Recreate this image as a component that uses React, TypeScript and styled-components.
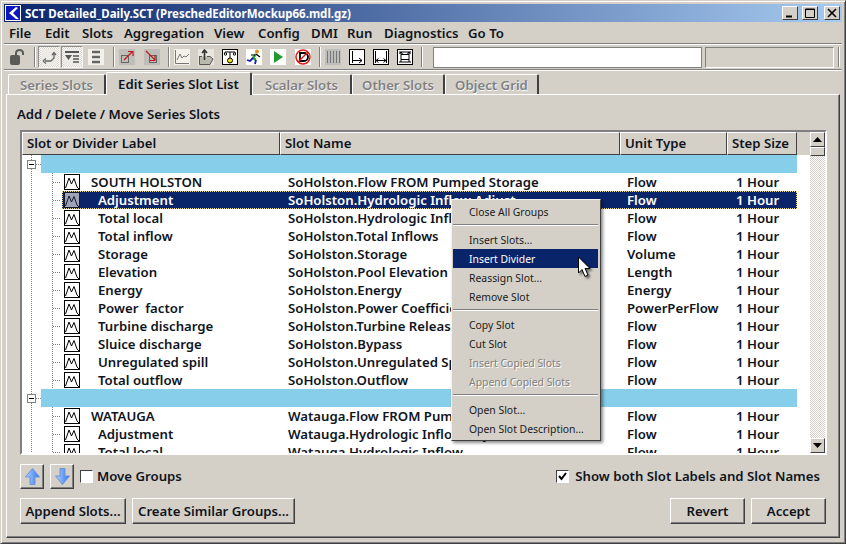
import React from 'react';
import styled, { createGlobalStyle } from 'styled-components';

const face = '#d4d0c8';
const navy = '#0a246a';
const uiFont = '"Noto Sans", "Liberation Sans", sans-serif';

const GlobalStyle = createGlobalStyle`
  html, body {
    margin: 0;
    padding: 0;
    background: ${face};
  }
  * {
    box-sizing: border-box;
  }
`;

const Window = styled.div`
  position: relative;
  width: 846px;
  height: 544px;
  overflow: hidden;
  background: ${face};
  border-style: solid;
  border-width: 1px;
  border-color: ${face} #404040 #404040 ${face};
  box-shadow: inset 1px 1px 0 #fff, inset -1px -1px 0 #808080;
  padding: 3px 3px 0 3px;
  font-family: ${uiFont};
  font-size: 13.2px;
  font-weight: 600;
  color: #10141c;
  display: flex;
  flex-direction: column;
`;

const TitleBar = styled.div`
  height: 18px;
  flex: none;
  display: flex;
  align-items: center;
  padding: 0 2px 0 1px;
  gap: 4px;
  color: #fff;
  font-size: 11.5px;
  font-weight: 700;
  background: linear-gradient(90deg, ${navy}, #a6caf0);
`;

const TitleText = styled.span`
  flex: 1;
  white-space: pre;
`;

const WinButton = styled.div<{ $gap?: number }>`
  width: 16px;
  height: 14px;
  margin-left: ${p => p.$gap ?? 0}px;
  background: ${face};
  border: 1px solid;
  border-color: #fff #404040 #404040 #fff;
  display: flex;
  align-items: center;
  justify-content: center;
`;

const MenuBar = styled.div`
  height: 21px;
  flex: none;
  display: flex;
  align-items: center;
  padding-left: 5px;
`;

const MenuItem = styled.span<{ $w: number }>`
  flex: none;
  width: ${p => p.$w}px;
`;

const Groove = styled.div`
  height: 2px;
  flex: none;
  border-top: 1px solid #808080;
  border-bottom: 1px solid #fff;
`;

const ToolBar = styled.div`
  height: 24px;
  flex: none;
  display: flex;
  align-items: center;
  padding-left: 6px;
`;

const Tool = styled.div<{ $gap?: number; $on?: boolean }>`
  flex: none;
  width: ${p => (p.$on ? 22 : 16)}px;
  height: ${p => (p.$on ? 22 : 16)}px;
  margin-left: ${p => p.$gap ?? 0}px;
  display: flex;
  align-items: center;
  justify-content: center;
  ${p => p.$on && `
    border: 1px solid;
    border-color: #909090 #f4f4f0 #f4f4f0 #909090;
    background: repeating-conic-gradient(#fff 0 25%, ${face} 0 50%) 0 0 / 2px 2px;
  `}
`;

const ToolSep = styled.div<{ $gap: number }>`
  flex: none;
  width: 2px;
  height: 20px;
  margin-left: ${p => p.$gap}px;
  border-left: 1px solid #808080;
  border-right: 1px solid #fff;
`;

const ToolInput = styled.div`
  flex: none;
  width: 269px;
  height: 21px;
  margin-left: 10px;
  background: #fff;
  border: 1px solid;
  border-color: #404040 ${face} ${face} #404040;
  outline: 1px solid;
  outline-color: #808080;
  outline-offset: -1px;
`;

const ToolField = styled.div`
  flex: none;
  width: 129px;
  height: 21px;
  margin-left: 3px;
  border: 1px solid;
  border-color: #808080 #fff #fff #808080;
`;

const TabRow = styled.div`
  height: 23px;
  flex: none;
  display: flex;
  align-items: flex-end;
  padding-left: 4px;
`;

const Tab = styled.div<{ $active?: boolean; $w: number }>`
  flex: none;
  width: ${p => p.$w}px;
  height: ${p => (p.$active ? 23 : 20)}px;
  margin-bottom: ${p => (p.$active ? -1 : 0)}px;
  position: relative;
  z-index: ${p => (p.$active ? 1 : 0)};
  display: flex;
  align-items: center;
  justify-content: center;
  background: ${face};
  border-style: solid;
  border-width: 1px 2px 0 1px;
  border-color: #fff #404040 ${face} #fff;
  border-radius: 2px 2px 0 0;
  color: ${p => (p.$active ? '#10141c' : '#808080')};
  text-shadow: ${p => (p.$active ? 'none' : '0.5px 0.5px 0 #fff')};
`;

const Panel = styled.div`
  height: 444px;
  flex: none;
  margin: 0 2px;
  border-style: solid;
  border-width: 1px;
  border-color: #fff #404040 #404040 #fff;
  box-shadow: inset -1px -1px 0 #808080;
  padding: 10px 0 0 13px;
  display: flex;
  flex-direction: column;
`;

const PanelTitle = styled.div`
  height: 18px;
  line-height: 18px;
  flex: none;
  margin-left: -3px;
  margin-bottom: 7px;
`;

const TableFrame = styled.div`
  flex: none;
  width: 807px;
  height: 325px;
  display: flex;
  border: 2px solid;
  border-color: #808080 #fff #fff #808080;
  box-shadow: inset 1px 1px 0 ${face};
`;

const TableMain = styled.div`
  width: 788px;
  display: flex;
  flex-direction: column;
`;

const HeaderRow = styled.div`
  height: 23px;
  flex: none;
  display: flex;
  background: ${face};
`;

const HeaderCell = styled.div<{ $w: number }>`
  flex: none;
  width: ${p => p.$w}px;
  display: flex;
  align-items: center;
  padding: 0 0 2px 4px;
  border: 1px solid;
  border-color: #fff #404040 #404040 #fff;
`;

const TableBody = styled.div`
  flex: 1;
  overflow: hidden;
  background: #fff;
`;

const Row = styled.div`
  height: 18px;
  display: flex;
`;

const SlotRowBox = styled.div<{ $selected?: boolean }>`
  width: 735px;
  height: 18px;
  flex: none;
  display: grid;
  grid-template-columns: 226px 339px 109px 61px;
  align-items: center;
  white-space: pre;
  ${p => p.$selected && `
    background: ${navy};
    color: #fff;
    outline: 1px dotted #e8d88a;
    outline-offset: -1px;
  `}
`;

const LabelCell = styled.div`
  display: flex;
  align-items: center;
  padding-left: 2px;
`;

const LabelText = styled.span<{ $head?: boolean }>`
  margin-left: ${p => (p.$head ? 11 : 18)}px;
`;

const DividerBand = styled.div`
  width: 756px;
  height: 18px;
  flex: none;
  background: #87ceeb;
`;

const Scroller = styled.div`
  flex: none;
  width: 15px;
  display: flex;
  flex-direction: column;
  background: repeating-conic-gradient(#fff 0 25%, ${face} 0 50%) 0 0 / 2px 2px;
`;

const ScrollButton = styled.div`
  flex: none;
  height: 15px;
  background: ${face};
  border: 1px solid;
  border-color: #fff #404040 #404040 #fff;
  display: flex;
  align-items: center;
  justify-content: center;
`;

const ScrollThumb = styled.div`
  flex: none;
  height: 9px;
  margin-bottom: auto;
  background: ${face};
  border: 1px solid;
  border-color: #fff #404040 #404040 #fff;
`;

const ControlRow = styled.div`
  flex: none;
  display: flex;
  align-items: center;
  height: 25px;
  margin-top: 9px;
`;

const ArrowButton = styled.div`
  width: 24px;
  height: 25px;
  margin-right: 6px;
  background: ${face};
  border: 1px solid;
  border-color: #fff #404040 #404040 #fff;
  box-shadow: inset -1px -1px 0 #808080;
  display: flex;
  align-items: center;
  justify-content: center;
`;

const CheckBox = styled.div`
  flex: none;
  width: 13px;
  height: 13px;
  background: #fff;
  border: 1px solid;
  border-color: #404040 #fff #fff #404040;
  display: flex;
  align-items: center;
  justify-content: center;
`;

const CheckLabel = styled.span<{ $gap: number }>`
  margin-left: ${p => p.$gap}px;
  padding-bottom: 2px;
  white-space: pre;
`;

const Spacer = styled.div`
  flex: 1;
`;

const RowEnd = styled.div`
  flex: none;
  width: 19px;
`;

const ButtonRow = styled.div`
  flex: none;
  display: flex;
  gap: 6px;
  height: 26px;
  margin-top: 9px;
  width: 806px;
`;

const PushButton = styled.div<{ $w: number }>`
  flex: none;
  width: ${p => p.$w}px;
  display: flex;
  align-items: center;
  justify-content: center;
  background: ${face};
  border: 1px solid;
  border-color: #fff #404040 #404040 #fff;
  box-shadow: inset -1px -1px 0 #808080;
`;

const Popup = styled.div`
  position: absolute;
  left: 450px;
  top: 198px;
  width: 150px;
  padding: 2px 2px 2px 1px;
  background: ${face};
  border: 1px solid;
  border-color: #f4f2ee #404040 #404040 #f4f2ee;
  box-shadow: 2px 2px 3px rgba(0, 0, 0, 0.45);
  font-size: 10.4px;
  font-weight: 400;
  color: #1a1a1a;
  z-index: 5;
`;

const PopupItem = styled.div<{ $active?: boolean; $off?: boolean }>`
  height: 19px;
  line-height: 21px;
  padding-left: 16px;
  white-space: pre;
  ${p => p.$active && `background: ${navy}; color: #fff;`}
  ${p => p.$off && 'color: #808080; text-shadow: 1px 1px 0 #fff;'}
`;

const PopupSep = styled.div`
  height: 2px;
  margin: 3px 0 4px;
  border-top: 1px solid #808080;
  border-bottom: 1px solid #fff;
`;

const PointerIcon = styled.svg`
  position: absolute;
  left: 576px;
  top: 255px;
  z-index: 6;
  filter: drop-shadow(2px 2px 1px rgba(0, 0, 0, 0.5));
`;

const Logo = () => (
  <svg width="16" height="16" viewBox="0 0 16 16">
    <rect width="16" height="16" fill="#0b18c0" />
    <rect x="0.5" y="0.5" width="15" height="15" fill="none" stroke="#fff" />
    <path d="M11 2 L4 8 L11 14 L14 14 L8 8 L13 3 Z" fill="#fff" />
  </svg>
);

const SlotIcon = ({ dim }: { dim?: boolean }) => (
  <svg width="16" height="16" viewBox="0 0 16 16" style={{ flex: 'none' }}>
    <rect x="0.5" y="0.5" width="15" height="15" fill={dim ? '#9fa3b6' : '#fff'} stroke={dim ? '#10162e' : '#000'} />
    <path d="M1.5 14 L5 4 L7.5 10 L10 4.5 L13 13 L15 15" fill="none" stroke={dim ? '#10162e' : '#000'} />
  </svg>
);

const TreeGutter = ({ group, w }: { group?: boolean; w: number }) => (
  <svg width={w} height="18" viewBox={`0 0 ${w} 18`} style={{ flex: 'none' }}>
    {group ? (
      <g>
        <path d="M9.5 0 V5 M9.5 14 V18 M14 9.5 H19" stroke="#808080" strokeDasharray="1 1" />
        <rect x="5.5" y="5.5" width="8" height="8" fill="#fff" stroke="#808080" />
        <path d="M7 9.5 H12" stroke="#000" />
      </g>
    ) : (
      <path d="M9.5 0 V18 M30.5 0 V18 M31 9.5 H39" stroke="#808080" strokeDasharray="1 1" fill="none" />
    )}
  </svg>
);

const icon = {
  lock: (
    <svg width="16" height="16" viewBox="0 0 16 16">
      <rect x="0" y="6" width="10" height="10" rx="2" fill="#5a5a56" />
      <path d="M6 7 V4 a3.5 3 0 0 1 7 0 V6" fill="none" stroke="#5a5a56" strokeWidth="2" />
    </svg>
  ),
  swap: (
    <svg width="16" height="16" viewBox="0 0 16 16">
      <rect width="16" height="16" fill="#ecebe6" />
      <path d="M13 4 V9 L10 12 H4 M2 12 L5 9.5 M2 12 L5 14.5 M11 6 L13 3.5 L15 6" fill="none" stroke="#666" strokeWidth="1.3" />
    </svg>
  ),
  sort: (
    <svg width="16" height="16" viewBox="0 0 16 16">
      <rect width="16" height="16" fill="#ecebe6" />
      <path d="M1 3 H15" stroke="#555" strokeWidth="2" />
      <path d="M1 6 H8 L4.5 11 Z" fill="#555" />
      <path d="M9 7 H15 M9 10 H15 M9 13 H15" stroke="#555" strokeWidth="1.6" />
    </svg>
  ),
  list: (
    <svg width="16" height="16" viewBox="0 0 16 16">
      <rect width="16" height="16" fill="#f4f1ea" />
      <path d="M4 3 H12 M4 8 H12 M4 13 H12" stroke="#666" strokeWidth="2.4" />
    </svg>
  ),
  out: (
    <svg width="16" height="16" viewBox="0 0 16 16">
      <rect width="16" height="16" fill="#bdbdb9" />
      <rect x="2.5" y="6.5" width="7" height="7" fill="none" stroke="#666" />
      <path d="M5 11 L13 3 M9 2.5 H14 V7" fill="none" stroke="#c01818" strokeWidth="1.2" />
    </svg>
  ),
  into: (
    <svg width="16" height="16" viewBox="0 0 16 16">
      <rect width="16" height="16" fill="#bdbdb9" />
      <rect x="5.5" y="6.5" width="7" height="7" fill="none" stroke="#666" />
      <path d="M2 2 L11 11 M11 6 V11.5 H6" fill="none" stroke="#c01818" strokeWidth="1.2" />
    </svg>
  ),
  chart: (
    <svg width="16" height="16" viewBox="0 0 16 16">
      <rect width="16" height="16" fill="#f4f1ea" />
      <path d="M1.5 1 V14.5 H15" fill="none" stroke="#777" />
      <path d="M3 11 L6 5 L8 9 L10 7 L12 8 L15 5" fill="none" stroke="#777" />
    </svg>
  ),
  upload: (
    <svg width="16" height="16" viewBox="0 0 16 16">
      <rect width="16" height="16" fill="#e8e6df" />
      <path d="M1 7.5 H4 M9 7.5 H12 L15 10 L12 15.5 H1.5 V7.5" fill="#bcb9ae" stroke="#555" />
      <path d="M6.5 11 V2 M4 4 L6.5 1 L9 4" fill="none" stroke="#333" strokeWidth="1.6" />
    </svg>
  ),
  gauge: (
    <svg width="16" height="16" viewBox="0 0 16 16">
      <rect x="0.5" y="0.5" width="15" height="15" fill="#fff" stroke="#000" />
      <path d="M3 5 V3 H13 V5 M8 3 V9" fill="none" stroke="#000" />
      <circle cx="3.5" cy="5" r="1.2" fill="#fff" stroke="#000" />
      <circle cx="12.5" cy="5" r="1.2" fill="#fff" stroke="#000" />
      <circle cx="8" cy="11.5" r="2.5" fill="#f0e020" stroke="#000" />
    </svg>
  ),
  runner: (
    <svg width="16" height="16" viewBox="0 0 16 16">
      <rect width="16" height="16" fill="#fff" />
      <circle cx="11" cy="2.5" r="2" fill="#e09020" />
      <path d="M10 5 L7 9 L10 11" fill="none" stroke="#20a020" strokeWidth="2.2" />
      <path d="M10 11 L9 15 M7 9 L4 12 L1 11" fill="none" stroke="#1818c0" strokeWidth="1.8" />
      <path d="M9 6 L5 6 M10 5 L14 8" fill="none" stroke="#000" strokeWidth="1.2" />
    </svg>
  ),
  play: (
    <svg width="16" height="16" viewBox="0 0 16 16">
      <rect width="16" height="16" fill="#fff" />
      <path d="M4 2 L13 8 L4 14 Z" fill="#1e9a30" />
    </svg>
  ),
  noD: (
    <svg width="16" height="16" viewBox="0 0 16 16">
      <rect width="16" height="16" fill="#fff" />
      <path d="M5 4 H9 a4 4 0 0 1 0 8 H5 Z" fill="none" stroke="#000" strokeWidth="1.8" />
      <circle cx="8" cy="8" r="7" fill="none" stroke="#e01818" strokeWidth="1.5" />
      <path d="M3 13 L13 3" stroke="#e01818" strokeWidth="1.5" />
    </svg>
  ),
  bars: (
    <svg width="16" height="16" viewBox="0 0 16 16">
      <rect width="16" height="16" fill="#bdbdb9" />
      <path d="M2.5 2 V14 M5.5 2 V14 M8.5 2 V14 M11.5 2 V14 M14.5 2 V14" stroke="#777" />
    </svg>
  ),
  widthEnd: (
    <svg width="16" height="16" viewBox="0 0 16 16">
      <rect x="0.5" y="0.5" width="15" height="15" fill="#fff" stroke="#000" />
      <path d="M3.5 2 V14 M3.5 11.5 H13 M10 9 L13 11.5 L10 14" fill="none" stroke="#000" />
    </svg>
  ),
  widthBoth: (
    <svg width="16" height="16" viewBox="0 0 16 16">
      <rect x="0.5" y="0.5" width="15" height="15" fill="#fff" stroke="#000" />
      <path d="M2.5 2 V14 M13.5 2 V14 M3 11.5 H13 M5.5 9.5 L3 11.5 L5.5 13.5 M10.5 9.5 L13 11.5 L10.5 13.5" fill="none" stroke="#000" />
    </svg>
  ),
  fit: (
    <svg width="16" height="16" viewBox="0 0 16 16">
      <rect x="0.5" y="0.5" width="15" height="15" fill="#fff" stroke="#000" />
      <path d="M2 3 H14 M2 13 H14 M4 3 V13 M12 3 V13 M4 5.5 H12 M4 10.5 H12 M2.5 5 L4 3 L5.5 5 M10.5 5 L12 3 L13.5 5" fill="none" stroke="#000" />
    </svg>
  ),
};

const ArrowIcon = ({ down }: { down?: boolean }) => (
  <svg width="15" height="17" viewBox="0 0 15 17">
    <defs>
      <linearGradient id={down ? 'dn' : 'up'} x1="0" x2="1" y1="0" y2="0">
        <stop offset="0" stopColor="#b4d2ff" />
        <stop offset="1" stopColor="#2f76f0" />
      </linearGradient>
    </defs>
    <path
      d={down ? 'M5 0.5 H10 V8 H14.5 L7.5 16.5 L0.5 8 H5 Z' : 'M7.5 0.5 L14.5 9 H10 V16.5 H5 V9 H0.5 Z'}
      fill={`url(#${down ? 'dn' : 'up'})`}
      stroke="#6c94d4"
    />
  </svg>
);

const CheckMark = () => (
  <svg width="11" height="11" viewBox="0 0 11 11">
    <path d="M2 5 L4.5 8 L9 2" fill="none" stroke="#000" strokeWidth="2" />
  </svg>
);

type Slot = { label: string; name: string; unit: string; head?: boolean; selected?: boolean };

const hour = '1 Hour';

const menus: [string, number][] = [
  ['File', 36], ['Edit', 37], ['Slots', 42], ['Aggregation', 90], ['View', 44],
  ['Config', 53], ['DMI', 36], ['Run', 37], ['Diagnostics', 84], ['Go To', 50],
];

const holston: Slot[] = [
  { label: 'SOUTH HOLSTON', name: 'SoHolston.Flow FROM Pumped Storage', unit: 'Flow', head: true },
  { label: 'Adjustment', name: 'SoHolston.Hydrologic Inflow Adjust.', unit: 'Flow', selected: true },
  { label: 'Total local', name: 'SoHolston.Hydrologic Inflow', unit: 'Flow' },
  { label: 'Total inflow', name: 'SoHolston.Total Inflows', unit: 'Flow' },
  { label: 'Storage', name: 'SoHolston.Storage', unit: 'Volume' },
  { label: 'Elevation', name: 'SoHolston.Pool Elevation', unit: 'Length' },
  { label: 'Energy', name: 'SoHolston.Energy', unit: 'Energy' },
  { label: 'Power  factor', name: 'SoHolston.Power Coefficient', unit: 'PowerPerFlow' },
  { label: 'Turbine discharge', name: 'SoHolston.Turbine Release', unit: 'Flow' },
  { label: 'Sluice discharge', name: 'SoHolston.Bypass', unit: 'Flow' },
  { label: 'Unregulated spill', name: 'SoHolston.Unregulated Spill', unit: 'Flow' },
  { label: 'Total outflow', name: 'SoHolston.Outflow', unit: 'Flow' },
];

const watauga: Slot[] = [
  { label: 'WATAUGA', name: 'Watauga.Flow FROM Pumped Storage', unit: 'Flow', head: true },
  { label: 'Adjustment', name: 'Watauga.Hydrologic Inflow Adjust.', unit: 'Flow' },
  { label: 'Total local', name: 'Watauga.Hydrologic Inflow', unit: 'Flow' },
];

const SlotRow = ({ slot }: { slot: Slot }) => (
  <Row>
    <TreeGutter w={40} />
    <SlotRowBox $selected={slot.selected}>
      <LabelCell>
        <SlotIcon dim={slot.selected} />
        <LabelText $head={slot.head}>{slot.label}</LabelText>
      </LabelCell>
      <span>{slot.name}</span>
      <span>{slot.unit}</span>
      <span>{hour}</span>
    </SlotRowBox>
  </Row>
);

const DividerRow = () => (
  <Row>
    <TreeGutter group w={19} />
    <DividerBand />
  </Row>
);

export default function App(): React.ReactElement {
  return (
    <Window>
      <GlobalStyle />
      <TitleBar>
        <Logo />
        <TitleText>SCT Detailed_Daily.SCT (PreschedEditorMockup66.mdl.gz)</TitleText>
        <WinButton>
          <svg width="10" height="10" viewBox="0 0 10 10"><path d="M1 8.5 H7" stroke="#000" strokeWidth="2" /></svg>
        </WinButton>
        <WinButton>
          <svg width="10" height="10" viewBox="0 0 10 10"><path d="M0.5 1 H9.5 V9.5 H0.5 Z M0.5 1.5 H9.5" fill="none" stroke="#000" /></svg>
        </WinButton>
        <WinButton $gap={2}>
          <svg width="10" height="10" viewBox="0 0 10 10"><path d="M1 1 L9 9 M9 1 L1 9" stroke="#000" strokeWidth="1.6" /></svg>
        </WinButton>
      </TitleBar>
      <MenuBar>
        {menus.map(([m, w]) => (
          <MenuItem key={m} $w={w}>{m}</MenuItem>
        ))}
      </MenuBar>
      <Groove />
      <ToolBar>
        <Tool>{icon.lock}</Tool>
        <ToolSep $gap={8} />
        <Tool $on $gap={2}>{icon.swap}</Tool>
        <Tool $on $gap={1}>{icon.sort}</Tool>
        <Tool $gap={5}>{icon.list}</Tool>
        <ToolSep $gap={9} />
        <Tool $gap={4}>{icon.out}</Tool>
        <Tool $gap={9}>{icon.into}</Tool>
        <ToolSep $gap={8} />
        <Tool $gap={4}>{icon.chart}</Tool>
        <Tool $gap={8}>{icon.upload}</Tool>
        <Tool $gap={8}>{icon.gauge}</Tool>
        <Tool $gap={8}>{icon.runner}</Tool>
        <Tool $gap={8}>{icon.play}</Tool>
        <Tool $gap={9}>{icon.noD}</Tool>
        <ToolSep $gap={8} />
        <Tool $gap={4}>{icon.bars}</Tool>
        <Tool $gap={8}>{icon.widthEnd}</Tool>
        <Tool $gap={8}>{icon.widthBoth}</Tool>
        <Tool $gap={8}>{icon.fit}</Tool>
        <ToolSep $gap={8} />
        <ToolInput />
        <ToolField />
        <ToolSep $gap={4} />
      </ToolBar>
      <Groove />
      <TabRow>
        <Tab $w={98}>Series Slots</Tab>
        <Tab $active $w={146}>Edit Series Slot List</Tab>
        <Tab $w={100}>Scalar Slots</Tab>
        <Tab $w={93}>Other Slots</Tab>
        <Tab $w={94}>Object Grid</Tab>
      </TabRow>
      <Panel>
        <PanelTitle>Add / Delete / Move Series Slots</PanelTitle>
        <TableFrame>
          <TableMain>
            <HeaderRow>
              <HeaderCell $w={258}>Slot or Divider Label</HeaderCell>
              <HeaderCell $w={340}>Slot Name</HeaderCell>
              <HeaderCell $w={107}>Unit Type</HeaderCell>
              <HeaderCell $w={70}>Step Size</HeaderCell>
            </HeaderRow>
            <TableBody>
              <DividerRow />
              {holston.map(s => <SlotRow key={s.name} slot={s} />)}
              <DividerRow />
              {watauga.map(s => <SlotRow key={s.name} slot={s} />)}
            </TableBody>
          </TableMain>
          <Scroller>
            <ScrollButton>
              <svg width="9" height="5" viewBox="0 0 9 5"><path d="M4.5 0 L9 5 H0 Z" fill="#000" /></svg>
            </ScrollButton>
            <ScrollThumb />
            <ScrollButton>
              <svg width="9" height="5" viewBox="0 0 9 5"><path d="M4.5 5 L9 0 H0 Z" fill="#000" /></svg>
            </ScrollButton>
          </Scroller>
        </TableFrame>
        <ControlRow>
          <ArrowButton><ArrowIcon /></ArrowButton>
          <ArrowButton><ArrowIcon down /></ArrowButton>
          <CheckBox />
          <CheckLabel $gap={4}>Move Groups</CheckLabel>
          <Spacer />
          <CheckBox><CheckMark /></CheckBox>
          <CheckLabel $gap={6}>Show both Slot Labels and Slot Names</CheckLabel>
          <RowEnd />
        </ControlRow>
        <ButtonRow>
          <PushButton $w={106}>Append Slots...</PushButton>
          <PushButton $w={163}>Create Similar Groups...</PushButton>
          <Spacer />
          <PushButton $w={75}>Revert</PushButton>
          <PushButton $w={75}>Accept</PushButton>
        </ButtonRow>
      </Panel>
      <Popup>
        <PopupItem>Close All Groups</PopupItem>
        <PopupSep />
        <PopupItem>Insert Slots...</PopupItem>
        <PopupItem $active>Insert Divider</PopupItem>
        <PopupItem>Reassign Slot...</PopupItem>
        <PopupItem>Remove Slot</PopupItem>
        <PopupSep />
        <PopupItem>Copy Slot</PopupItem>
        <PopupItem>Cut Slot</PopupItem>
        <PopupItem $off>Insert Copied Slots</PopupItem>
        <PopupItem $off>Append Copied Slots</PopupItem>
        <PopupSep />
        <PopupItem>Open Slot...</PopupItem>
        <PopupItem>Open Slot Description...</PopupItem>
      </Popup>
      <PointerIcon width="16" height="24" viewBox="0 0 16 24">
        <path d="M1.5 1 V17 L5 13.5 L8 20.5 L11 19 L8 12.5 H13 Z" fill="#fff" stroke="#000" />
      </PointerIcon>
    </Window>
  );
}
